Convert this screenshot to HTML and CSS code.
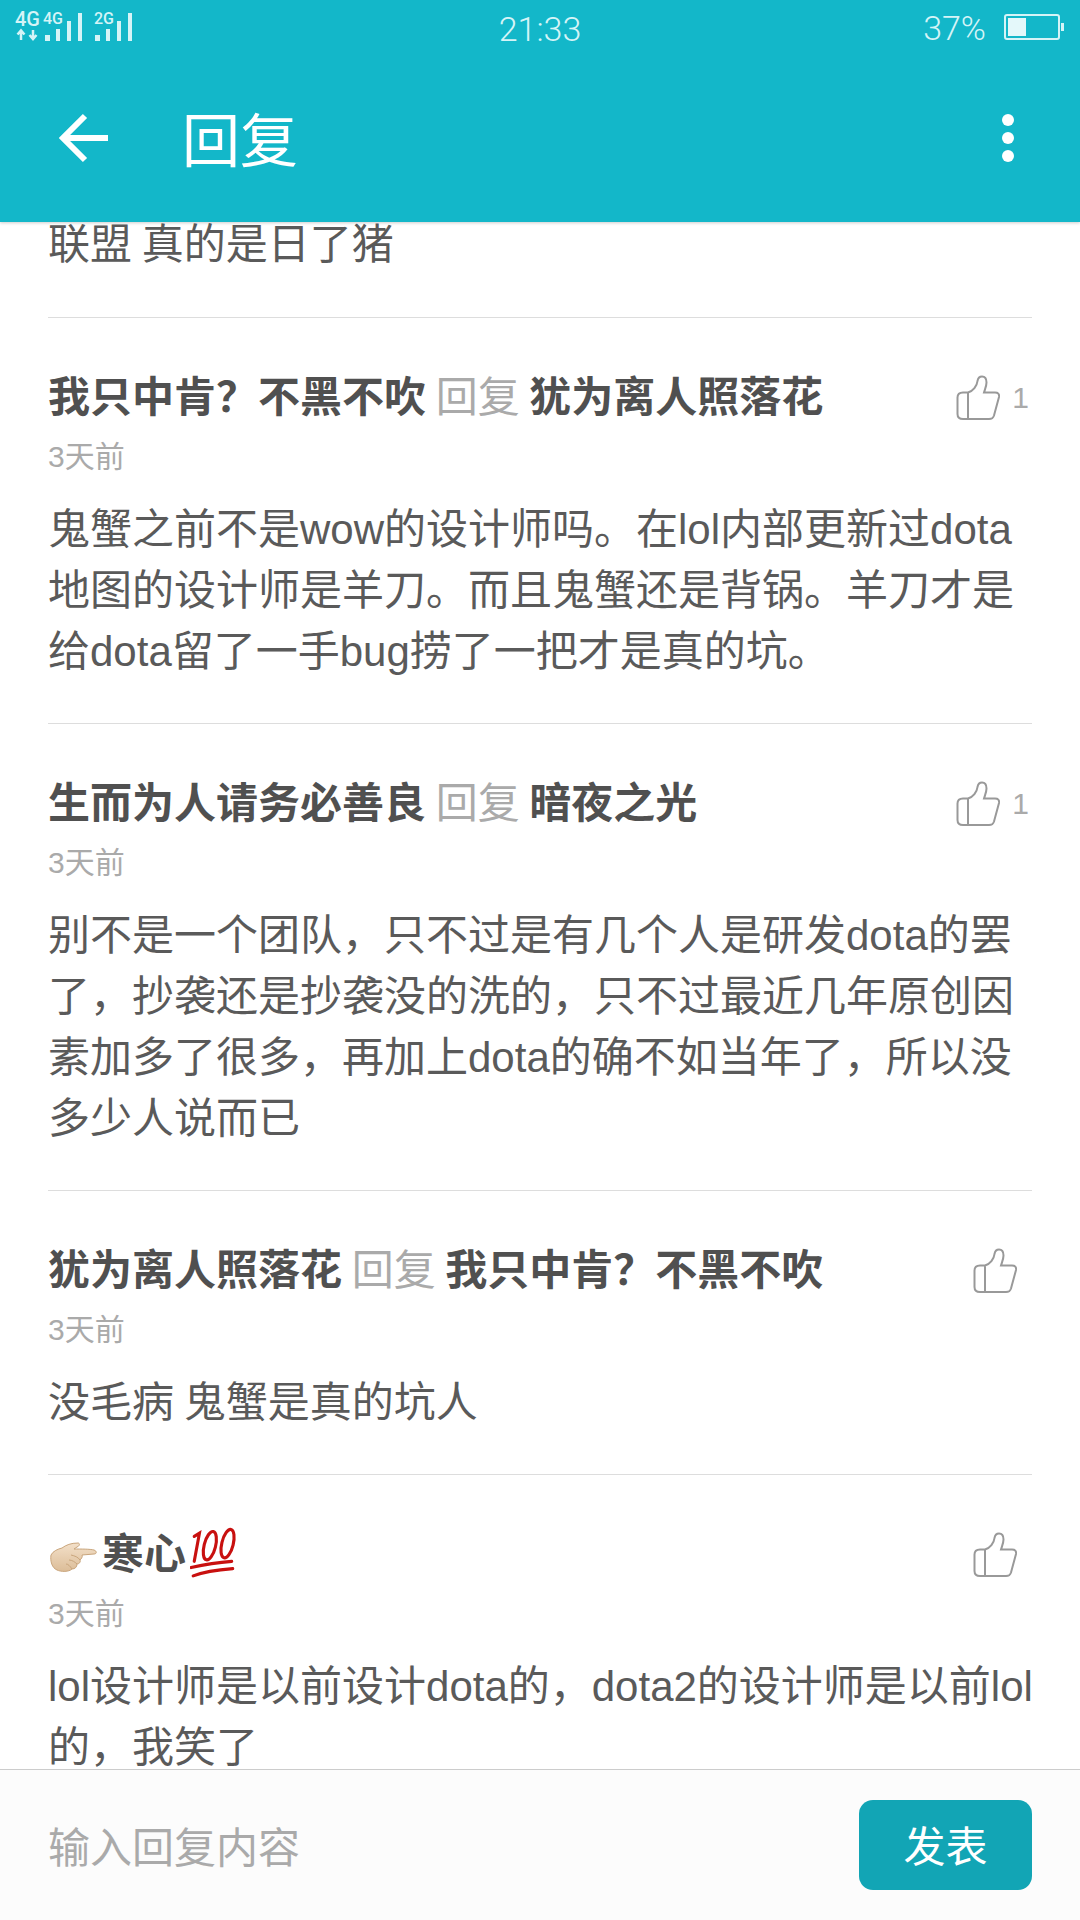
FILE: index.html
```html
<!DOCTYPE html>
<html lang="zh-CN">
<head>
    <meta charset="UTF-8">
    <meta name="viewport" content="width=device-width, initial-scale=1.0">
    <title>回复</title>
    <link rel="stylesheet" href="styles.css">
</head>
<body>
    <header class="top">
        <div class="status">
            <svg class="signal" width="134" height="44" viewBox="0 0 134 44">
                <text x="15" y="26" class="sig-big">4G</text>
                <path d="M21 40v-7M17.5 34.500l3.500-4 3.500 4M33 30v7M29.500 35l3.500 4 3.500-4" class="sig-arrow"/>
                <text x="43" y="24" class="sig-small">4G</text>
                <rect x="45" y="35" width="5" height="6"/>
                <rect x="56" y="29" width="4" height="12"/>
                <rect x="67" y="21" width="4" height="20"/>
                <rect x="78" y="13" width="4" height="28"/>
                <text x="94" y="24" class="sig-small">2G</text>
                <rect x="95" y="35" width="5" height="6"/>
                <rect x="106" y="29" width="4" height="12"/>
                <rect x="117" y="21" width="4" height="20"/>
                <rect x="128" y="13" width="4" height="28"/>
            </svg>
            <span class="clock">21:33</span>
            <span class="percent">37%</span>
            <div class="battery"><div class="battery-fill"></div></div>
            <div class="battery-tip"></div>
        </div>
        <div class="bar">
            <svg class="back" width="50" height="50" viewBox="0 0 50 50">
                <path d="M3 25H49M26 3L4 25l22 22" />
            </svg>
            <h1 class="title">回复</h1>
            <div class="more"><i></i><i></i><i></i></div>
        </div>
    </header>

    <main class="list">
        <section class="item item-cut">
            <p class="text">联盟 真的是日了猪</p>
        </section>

        <section class="item">
            <div class="head">
                <div class="name">我只中肯？不黑不吹 <span class="reply">回复</span> 犹为离人照落花</div>
                <div class="like">
                    <svg class="thumb" width="44" height="46" viewBox="0 0 44 46"><path d="M12 17.500C17 16 21 11 21.500 6C22 3 23.500 1.500 26 1.500C29 1.500 30.500 4 30.500 7.500C30.500 11 29 14 28 17.500H39C42 17.500 43.500 19 43 22L38 40.500C37 43.500 36 44 33 44H7C3 44 1.500 42 1.500 39V22.500C1.500 19 3 17.500 7 17.500H12V44"/></svg>
                    <span class="count">1</span>
                </div>
            </div>
            <div class="date">3天前</div>
            <p class="text">鬼蟹之前不是wow的设计师吗。在lol内部更新过dota地图的设计师是羊刀。而且鬼蟹还是背锅。羊刀才是给dota留了一手bug捞了一把才是真的坑。</p>
        </section>

        <section class="item">
            <div class="head">
                <div class="name">生而为人请务必善良 <span class="reply">回复</span> 暗夜之光</div>
                <div class="like">
                    <svg class="thumb" width="44" height="46" viewBox="0 0 44 46"><path d="M12 17.500C17 16 21 11 21.500 6C22 3 23.500 1.500 26 1.500C29 1.500 30.500 4 30.500 7.500C30.500 11 29 14 28 17.500H39C42 17.500 43.500 19 43 22L38 40.500C37 43.500 36 44 33 44H7C3 44 1.500 42 1.500 39V22.500C1.500 19 3 17.500 7 17.500H12V44"/></svg>
                    <span class="count">1</span>
                </div>
            </div>
            <div class="date">3天前</div>
            <p class="text">别不是一个团队，只不过是有几个人是研发dota的罢了，抄袭还是抄袭没的洗的，只不过最近几年原创因素加多了很多，再加上dota的确不如当年了，所以没多少人说而已</p>
        </section>

        <section class="item">
            <div class="head">
                <div class="name">犹为离人照落花 <span class="reply">回复</span> 我只中肯？不黑不吹</div>
                <div class="like like-empty">
                    <svg class="thumb" width="44" height="46" viewBox="0 0 44 46"><path d="M12 17.500C17 16 21 11 21.500 6C22 3 23.500 1.500 26 1.500C29 1.500 30.500 4 30.500 7.500C30.500 11 29 14 28 17.500H39C42 17.500 43.500 19 43 22L38 40.500C37 43.500 36 44 33 44H7C3 44 1.500 42 1.500 39V22.500C1.500 19 3 17.500 7 17.500H12V44"/></svg>
                </div>
            </div>
            <div class="date">3天前</div>
            <p class="text">没毛病 鬼蟹是真的坑人</p>
        </section>

        <section class="item">
            <div class="head">
                <div class="name name-emoji">
                    <svg class="emoji-hand" width="48" height="30" viewBox="0 0 48 30">
                        <defs>
                            <linearGradient id="skin" x1="0" y1="0" x2="0" y2="1">
                                <stop offset="0" stop-color="#f3e0c9"/>
                                <stop offset="1" stop-color="#dcbd98"/>
                            </linearGradient>
                        </defs>
                        <path class="hand" d="M2 13C4 9 9 7 13 6C17 3 22 1 29 1C31 1 31 4 28 5L25 7C32 7 41 7 45 8C48 9 48 12 45 12L33 13C34 15 32 17 31 18C32 20 30 22 28 22C28 25 26 27 23 27C20 30 12 30 8 28C3 26 1 19 2 13Z"/>
                        <path class="hand-line" d="M22 13C26 14 29 15 31 18M20 18C23 18 26 20 28 22M17 22C19 22 21 24 23 27"/>
                    </svg>
                    <span>寒心</span>
                    <svg class="emoji-100" width="48" height="52" viewBox="0 0 46 50">
                        <g class="hundred">
                            <path d="M4 9L9 6L4 33"/>
                            <ellipse cx="19" cy="18" rx="5.500" ry="14" transform="rotate(14 19 18)"/>
                            <ellipse cx="36" cy="16" rx="5.500" ry="14" transform="rotate(14 36 16)"/>
                            <path d="M1 39C14 36 26 34 40 33"/>
                            <path d="M3 47C16 42 28 41 41 40"/>
                        </g>
                    </svg>
                </div>
                <div class="like like-empty">
                    <svg class="thumb" width="44" height="46" viewBox="0 0 44 46"><path d="M12 17.500C17 16 21 11 21.500 6C22 3 23.500 1.500 26 1.500C29 1.500 30.500 4 30.500 7.500C30.500 11 29 14 28 17.500H39C42 17.500 43.500 19 43 22L38 40.500C37 43.500 36 44 33 44H7C3 44 1.500 42 1.500 39V22.500C1.500 19 3 17.500 7 17.500H12V44"/></svg>
                </div>
            </div>
            <div class="date">3天前</div>
            <p class="text">lol设计师是以前设计dota的，dota2的设计师是以前lol的，我笑了</p>
        </section>
    </main>

    <footer class="composer">
        <div class="placeholder">输入回复内容</div>
        <button class="send">发表</button>
    </footer>
</body>
</html>
```

FILE: styles.css
```css
* {
    box-sizing: border-box;
}

html, body {
    height: 100%;
}

body {
    margin: 0;
    height: 1920px;
    display: flex;
    flex-direction: column;
    overflow: hidden;
    background-color: #fff;
    color: #5a5a5a;
    font-family: "Liberation Sans", "Noto Sans CJK SC", sans-serif;
}

/* top bar */
.top {
    flex: none;
    height: 222px;
    background-color: #13b7c9;
    box-shadow: 0 1px 3px rgba(0, 0, 0, 0.2);
    position: relative;
    z-index: 2;
}

.status {
    height: 58px;
    display: flex;
    align-items: flex-start;
    color: #d5f4f7;
    font-family: Roboto, sans-serif;
}

.signal {
    flex: none;
    fill: #d5f4f7;
}

.sig-big {
    font: 500 20px Roboto, sans-serif;
}

.sig-small {
    font: 500 16px Roboto, sans-serif;
}

.sig-arrow {
    fill: none;
    stroke: #d5f4f7;
    stroke-width: 2.5;
}

.clock {
    margin-left: 356px;
    width: 100px;
    font-size: 34px;
    font-weight: 300;
    line-height: 58px;
    text-align: center;
}

.percent {
    margin-left: auto;
    font-size: 34px;
    font-weight: 300;
    line-height: 56px;
}

.battery {
    width: 56px;
    height: 26px;
    margin: 14px 0 0 18px;
    padding: 2px;
    border: 2px solid #d5f4f7;
    border-radius: 3px;
}

.battery-fill {
    width: 18px;
    height: 100%;
    background-color: #e4f8fa;
}

.battery-tip {
    width: 3px;
    height: 8px;
    margin: 23px 16px 0 1px;
    background-color: #d5f4f7;
}

.bar {
    height: 164px;
    display: flex;
    align-items: center;
    padding-bottom: 4px;
    padding-left: 59px;
    color: #fff;
}

.back {
    flex: none;
    fill: none;
    stroke: #fff;
    stroke-width: 6;
}

.title {
    margin: 8px 0 0 73px;
    font-size: 58px;
    font-weight: 400;
    line-height: 64px;
}

.more {
    margin-left: auto;
    margin-right: 66px;
    display: flex;
    flex-direction: column;
    gap: 6px;
}

.more i {
    display: block;
    width: 12px;
    height: 12px;
    border-radius: 50%;
    background-color: #fff;
}

/* replies */
.list {
    flex: 1;
    min-height: 0;
    overflow: hidden;
    padding: 0 48px;
}

.item {
    padding: 52px 0 41px;
    border-bottom: 1px solid #ddd;
}

.item-cut {
    margin-top: -8px;
    padding-top: 0;
    padding-bottom: 42px;
}

.head {
    display: flex;
    justify-content: space-between;
}

.name {
    font-size: 42px;
    font-weight: 700;
    line-height: 56px;
    white-space: nowrap;
    word-spacing: -2px;
    color: #505050;
}

.reply {
    color: #aaa;
    font-weight: 400;
}

.name-emoji {
    display: flex;
    align-items: center;
}

.emoji-hand {
    flex: none;
    margin: 4px 5px 0 1px;
}

.emoji-100 {
    flex: none;
    margin: -4px 0 0 4px;
}

.hand {
    fill: url(#skin);
    stroke: #c9a57c;
    stroke-width: 1;
}

.hand-line {
    fill: none;
    stroke: #c9a57c;
    stroke-width: 1;
}

.hundred {
    fill: none;
    stroke: #c8100f;
    stroke-width: 3;
    stroke-linecap: round;
}

.like {
    display: flex;
    align-items: center;
    gap: 12px;
    margin-right: 3px;
    color: #aaa;
}

.like-empty {
    margin-right: 15px;
}

.thumb {
    fill: none;
    stroke: #999;
    stroke-width: 2;
}

.count {
    font-size: 30px;
    line-height: 30px;
}

.date {
    margin-top: 11px;
    color: #aaa;
    font-size: 30px;
    line-height: 40px;
}

.text {
    margin: 22px -2px 0 0;
    font-size: 42px;
    line-height: 61px;
    word-spacing: -2px;
}

.item-cut .text {
    margin-top: 0;
}

/* bottom input */
.composer {
    flex: none;
    height: 151px;
    display: flex;
    align-items: flex-start;
    justify-content: space-between;
    padding: 30px 48px 0;
    background-color: #fcfcfc;
    border-top: 1px solid #ccc;
}

.placeholder {
    color: #aaa;
    font-size: 42px;
    line-height: 98px;
}

.send {
    width: 173px;
    height: 90px;
    padding: 0 0 4px;
    border: none;
    border-radius: 14px;
    background-color: #12a5b5;
    color: #fff;
    font-family: inherit;
    font-size: 42px;
}
```
